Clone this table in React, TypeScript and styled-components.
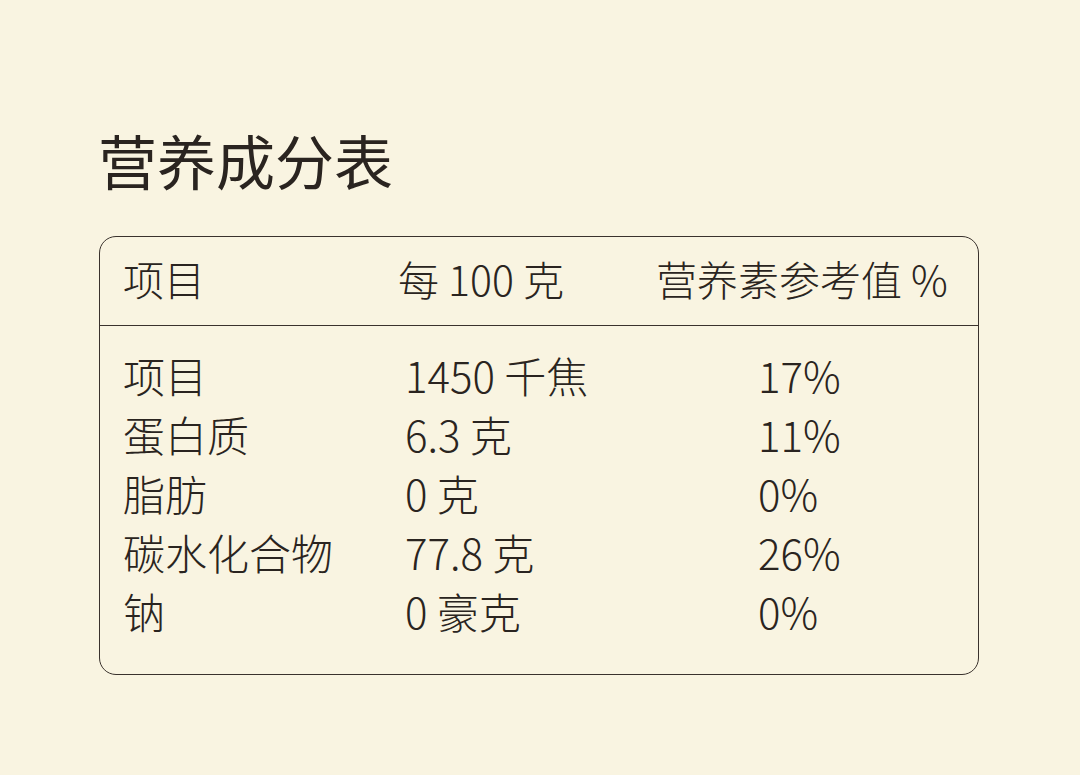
import React from 'react';
import styled, { createGlobalStyle } from 'styled-components';

const GlobalStyle = createGlobalStyle`
  html, body {
    margin: 0;
    padding: 0;
    background: #f9f4e1;
  }
  body {
    font-family: "Noto Sans CJK SC", "Noto Sans", sans-serif;
    color: #2a2420;
  }
`;

const Page = styled.div`
  width: 1080px;
  height: 775px;
  box-sizing: border-box;
  padding: 122px 101px 0 98px;
  background: #f9f4e1;
`;

const Title = styled.h1`
  margin: 0 0 38px;
  font-size: 59px;
  line-height: 76px;
  font-weight: 400;
  color: #2a2420;
`;

const Card = styled.div`
  margin-left: 1px;
  border: 1.5px solid #3a322d;
  border-radius: 17px;
  overflow: hidden;
`;

const HeaderRow = styled.div`
  display: grid;
  grid-template-columns: 275px 258px 1fr;
  align-items: center;
  height: 89px;
  padding: 0 0 5px 23px;
  box-sizing: border-box;
  border-bottom: 1.5px solid #3a322d;
`;

const Body = styled.div`
  padding: 19px 0 34px 23px;
`;

const Row = styled.div`
  display: grid;
  grid-template-columns: 282px 353px 1fr;
  align-items: center;
  height: 59px;
`;

const Cell = styled.div<{ $size?: number }>`
  font-size: ${p => p.$size ?? 42}px;
  line-height: 59px;
  font-weight: 300;
  white-space: nowrap;
`;

const rows = [
  ['项目', '1450 千焦', '17%'],
  ['蛋白质', '6.3 克', '11%'],
  ['脂肪', '0 克', '0%'],
  ['碳水化合物', '77.8 克', '26%'],
  ['钠', '0 豪克', '0%']
];

export default function App() {
  return (
    <Page>
      <GlobalStyle />
      <Title>营养成分表</Title>
      <Card>
        <HeaderRow>
          <Cell $size={41}>项目</Cell>
          <Cell $size={41}>每 100 克</Cell>
          <Cell $size={41}>营养素参考值 %</Cell>
        </HeaderRow>
        <Body>
          {rows.map(r => (
            <Row key={r[0]}>
              <Cell>{r[0]}</Cell>
              <Cell>{r[1]}</Cell>
              <Cell>{r[2]}</Cell>
            </Row>
          ))}
        </Body>
      </Card>
    </Page>
  );
}
